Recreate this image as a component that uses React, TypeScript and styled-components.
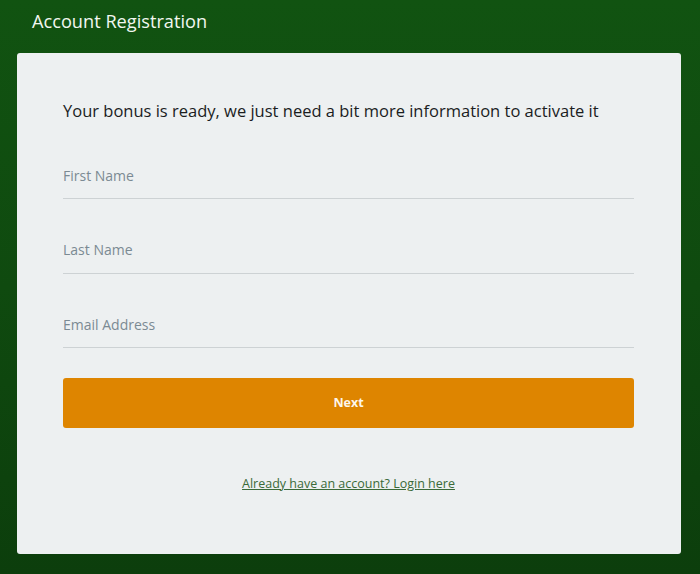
import React from "react";
import styled, { createGlobalStyle } from "styled-components";

const Global = createGlobalStyle`
  html, body { margin: 0; padding: 0; }
  body {
    min-height: 574px;
    background: linear-gradient(180deg, #115311 0%, #0f4a0f 50%, #0c3e0c 100%);
    font-family: "Open Sans", "Noto Sans", sans-serif;
  }
  * { box-sizing: border-box; }
`;

const Page = styled.div`
  display: flex;
  flex-direction: column;
  padding: 0 19px 20px 17px;
`;

const Header = styled.header`
  height: 53px;
  padding: 9px 0 0 15px;
`;

const Title = styled.h1`
  margin: 0;
  font-size: 18.2px;
  line-height: 24px;
  font-weight: 400;
  color: #f2f7f0;
`;

const Card = styled.main`
  background: #edf0f1;
  border-radius: 3px;
  height: 501px;
  padding: 46px 47px 0 46px;
  display: flex;
  flex-direction: column;
`;

const Lead = styled.p`
  margin: 0 0 40px;
  font-size: 16.5px;
  line-height: 24px;
  color: #1b1d1e;
`;

const Form = styled.form`
  display: flex;
  flex-direction: column;
  gap: 38.5px;
`;

const Input = styled.input`
  display: block;
  width: 100%;
  border: none;
  border-bottom: 1px solid #cdd2d4;
  background: transparent;
  padding: 0 0 11px;
  height: 36px;
  font-family: inherit;
  font-size: 14px;
  line-height: 24px;
  color: #333;
  outline: none;
  &::placeholder { color: #7b8a93; }
`;

const Button = styled.button`
  margin-top: -9px;
  height: 50px;
  width: 100%;
  border: none;
  border-radius: 3px;
  background: #de8500;
  color: #fdf6ea;
  font-family: inherit;
  font-weight: 700;
  font-size: 12.5px;
  cursor: pointer;
`;

const Footer = styled.div`
  margin-top: 44px;
  text-align: center;
  line-height: 20px;
`;

const LoginLink = styled.a`
  font-size: 12.5px;
  color: #3a6a38;
  text-decoration: underline;
`;

export default function App() {
  return (
    <>
      <Global />
      <Page>
        <Header>
          <Title>Account Registration</Title>
        </Header>
        <Card>
          <Lead>Your bonus is ready, we just need a bit more information to activate it</Lead>
          <Form onSubmit={(e) => e.preventDefault()}>
            <Input placeholder="First Name" />
            <Input placeholder="Last Name" />
            <Input placeholder="Email Address" type="email" />
            <Button type="submit">Next</Button>
          </Form>
          <Footer>
            <LoginLink href="#">Already have an account? Login here</LoginLink>
          </Footer>
        </Card>
      </Page>
    </>
  );
}
